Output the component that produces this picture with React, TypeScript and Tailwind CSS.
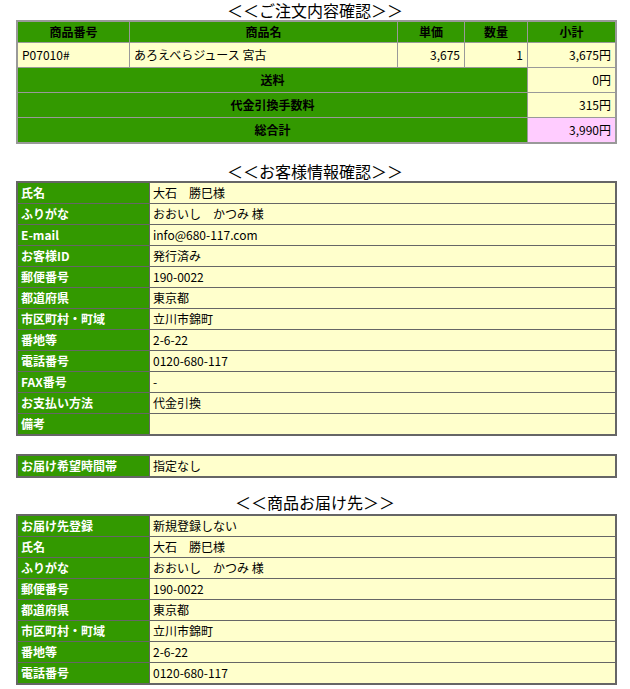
import React from 'react';

interface InfoRow {
  label: string;
  value: string;
}

const customerRows: InfoRow[] = [
  { label: '氏名', value: '大石　勝巳様' },
  { label: 'ふりがな', value: 'おおいし　かつみ 様' },
  { label: 'E-mail', value: 'info@680-117.com' },
  { label: 'お客様ID', value: '発行済み' },
  { label: '郵便番号', value: '190-0022' },
  { label: '都道府県', value: '東京都' },
  { label: '市区町村・町域', value: '立川市錦町' },
  { label: '番地等', value: '2-6-22' },
  { label: '電話番号', value: '0120-680-117' },
  { label: 'FAX番号', value: '-' },
  { label: 'お支払い方法', value: '代金引換' },
  { label: '備考', value: '' },
];

const deliveryRows: InfoRow[] = [
  { label: 'お届け先登録', value: '新規登録しない' },
  { label: '氏名', value: '大石　勝巳様' },
  { label: 'ふりがな', value: 'おおいし　かつみ 様' },
  { label: '郵便番号', value: '190-0022' },
  { label: '都道府県', value: '東京都' },
  { label: '市区町村・町域', value: '立川市錦町' },
  { label: '番地等', value: '2-6-22' },
  { label: '電話番号', value: '0120-680-117' },
];

const SectionTitle: React.FC<{ children: React.ReactNode; className?: string }> = ({ children, className }) => (
  <div className={`text-center text-[16px] leading-[20px] text-black ${className ?? ''}`}>{children}</div>
);

const InfoTable: React.FC<{ rows: InfoRow[]; className?: string }> = ({ rows, className }) => (
  <div className={`ml-4 w-[601px] border-2 border-[#666666] bg-[#666666] grid grid-cols-[131px_1fr] gap-px ${className ?? ''}`}>
    {rows.map((row, index) => (
      <React.Fragment key={index}>
        <div className="h-[20px] bg-[#339900] px-[3px] flex items-center text-[12px] font-bold text-white">
          {row.label}
        </div>
        <div className="h-[20px] bg-[#ffffcc] px-[3px] flex items-center text-[12px] text-black">
          {row.value}
        </div>
      </React.Fragment>
    ))}
  </div>
);

const App: React.FC = () => {
  const head = 'h-[20px] bg-[#339900] flex items-center justify-center font-bold text-black';
  const cell = 'h-[24px] bg-[#ffffcc] flex items-center px-[4px]';
  const sumLabel = 'col-span-4 h-[24px] bg-[#339900] flex items-center justify-center font-bold text-black';

  return (
    <div className="w-[630px] min-h-[689px] bg-white font-['Noto_Sans_CJK_JP','Noto_Sans',sans-serif] text-[12px] text-black">
      <SectionTitle className="h-[20px]">＜＜ご注文内容確認＞＞</SectionTitle>

      {/* order summary */}
      <div className="ml-4 w-[601px] border-2 border-[#999999] bg-[#999999] grid grid-cols-[111px_267px_66px_62px_1fr] gap-px">
        <div className={head}>商品番号</div>
        <div className={head}>商品名</div>
        <div className={head}>単価</div>
        <div className={head}>数量</div>
        <div className={head}>小計</div>

        <div className={cell}>P07010#</div>
        <div className={cell}>あろえべらジュース 宮古</div>
        <div className={`${cell} justify-end`}>3,675</div>
        <div className={`${cell} justify-end`}>1</div>
        <div className={`${cell} justify-end`}>3,675円</div>

        <div className={sumLabel}>送料</div>
        <div className={`${cell} justify-end`}>0円</div>

        <div className={sumLabel}>代金引換手数料</div>
        <div className={`${cell} justify-end`}>315円</div>

        <div className={sumLabel}>総合計</div>
        <div className="h-[24px] bg-[#ffccff] flex items-center justify-end px-[4px]">3,990円</div>
      </div>

      <SectionTitle className="mt-[17px]">＜＜お客様情報確認＞＞</SectionTitle>
      <InfoTable rows={customerRows} />

      <InfoTable rows={[{ label: 'お届け希望時間帯', value: '指定なし' }]} className="mt-[18px]" />

      <SectionTitle className="mt-[14px] mb-[2px]">＜＜商品お届け先＞＞</SectionTitle>
      <InfoTable rows={deliveryRows} />
    </div>
  );
};

export default App;
